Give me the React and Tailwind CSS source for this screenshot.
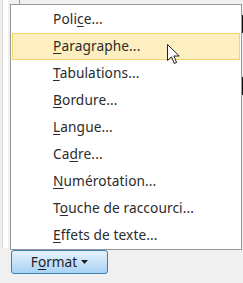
import React from 'react';

const items = [
  ['Poli', 'c', 'e...'],
  ['', 'P', 'aragraphe...'],
  ['', 'T', 'abulations...'],
  ['', 'B', 'ordure...'],
  ['', 'L', 'angue...'],
  ['Ca', 'd', 're...'],
  ['', 'N', 'umérotation...'],
  ['T', 'o', 'uche de raccourci...'],
  ['', 'E', 'ffets de texte...'],
];

const Cursor = () => (
  <svg width="14" height="22" viewBox="0 0 14 22" className="absolute left-[167px] top-[44px]">
    <path
      d="M0.5 0.5 L0.5 16.5 L4.5 12.8 L7.3 19.5 L9.6 18.5 L6.9 12 L12.2 12 Z"
      fill="#fff"
      stroke="#222"
      strokeWidth="1"
      strokeLinejoin="round"
    />
  </svg>
);

export default function App() {
  return (
    <div className="relative w-[243px] h-[283px] bg-[#f0f0f0] overflow-hidden font-['Noto_Sans','Liberation_Sans',sans-serif]">
      {/* bits of the window behind the menu */}
      <div className="absolute left-[2px] top-0 w-[6px] h-[248px] bg-white border-l border-[#dcdcdc]" />
      <div className="absolute left-[19px] top-0 w-px h-[4px] bg-[#9a9a9a]" />
      <div className="absolute left-[241px] top-[15px] w-[2px] h-[18px] bg-[#111]" />
      <div className="absolute left-[241px] top-[77px] w-[2px] h-[18px] bg-[#111]" />

      <div className="relative flex flex-col items-start pt-[4px] pl-[10px]">
        <div className="w-[232px] bg-white border border-[#979797] px-px pt-px flex flex-col">
          {items.map(([a, u, b], i) => (
            <div
              key={i}
              className={
                'h-[27px] flex items-center pl-[40px] text-[13.7px] tracking-[0.1px] text-[#2b2b2b] border ' +
                (i === 1 ? 'bg-[#fdefc0] border-[#f2d46e]' : 'border-transparent')
              }
            >
              <span>
                {a}
                <span className="underline underline-offset-2">{u}</span>
                {b}
              </span>
            </div>
          ))}
        </div>

        <button className="ml-px w-[97px] h-[24px] rounded-[3px] border border-[#3c7fb1] bg-gradient-to-b from-[#e6f2fd] to-[#a8d2f4] flex items-center justify-center gap-[4px] text-[13.7px] text-[#1e1e1e]">
          <span>
            F<span className="underline underline-offset-2">o</span>rmat
          </span>
          <svg width="7" height="4" viewBox="0 0 7 4">
            <path d="M0 0 L7 0 L3.5 4 Z" fill="#1e1e1e" />
          </svg>
        </button>
      </div>

      <Cursor />
    </div>
  );
}
